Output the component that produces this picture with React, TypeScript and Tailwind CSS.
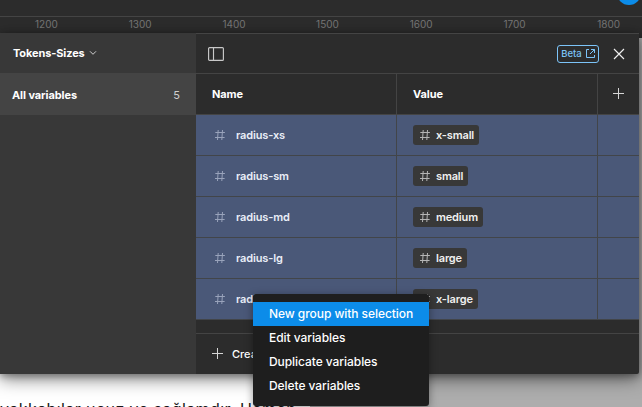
import React from "react";

const TICKS = ["1200", "1300", "1400", "1500", "1600", "1700", "1800"];

const ROWS = [
  { name: "radius-xs", value: "x-small" },
  { name: "radius-sm", value: "small" },
  { name: "radius-md", value: "medium" },
  { name: "radius-lg", value: "large" },
  { name: "radius-xl", value: "x-large" },
];

const MENU = ["New group with selection", "Edit variables", "Duplicate variables", "Delete variables"];

function Hash({ className }: { className: string }) {
  return (
    <svg viewBox="0 0 12 12" className={"h-3 w-3 shrink-0 " + className} fill="none" stroke="currentColor">
      <path d="M4.2 1 3.5 11M8.5 1 7.8 11M1.3 3.5h9.6M1 8.5h9.6" />
    </svg>
  );
}

function Plus() {
  return (
    <svg viewBox="0 0 12 12" className="h-3 w-3 shrink-0" fill="none" stroke="#d6d6d6">
      <path d="M5.5 0v11M0 5.5h11" />
    </svg>
  );
}

function Sidebar() {
  return (
    <aside className="flex w-[196px] shrink-0 flex-col bg-[#383838]">
      <div className="flex h-10 items-center pl-[13px] font-bold">
        <span className="tracking-[-0.12px]">Tokens-Sizes</span>
        <svg viewBox="0 0 8 6" className="ml-1 h-1.5 w-2" fill="none" stroke="#d0d0d0">
          <path d="m1 1.3 3 3 3-3" />
        </svg>
      </div>
      <div className="flex h-[42px] items-center justify-between bg-[#444444] pt-[3px] pr-4 pl-3">
        <span className="font-bold tracking-[-0.09px]">All variables</span>
        <span className="text-[#cfcfcf]">5</span>
      </div>
    </aside>
  );
}

function Toolbar() {
  return (
    <div className="flex h-[41px] items-center border-y border-[#444444] pr-3.5 pl-3">
      <svg viewBox="0 0 16 14" className="h-3.5 w-4" fill="none" stroke="#c9c9c9" strokeWidth="1.15">
        <rect x="0.6" y="0.6" width="14.8" height="12.8" rx="1" />
        <path d="M5.5 0.5v13" />
      </svg>
      <div className="ml-auto flex h-[18px] w-[42px] items-center justify-center gap-1 rounded-[3px] border border-[#7cc4f8] text-[9.5px] font-medium text-[#7cc4f8]">
        <span className="pt-px">Beta</span>
        <svg viewBox="0 0 9 9" className="h-[9px] w-[9px]" fill="none" stroke="currentColor">
          <path d="M3 .5H.5v8h8V6M5 .5h3.5V4M8.5.5 4 5" />
        </svg>
      </div>
      <svg viewBox="0 0 12 12" className="ml-3.5 h-3 w-3" fill="none" stroke="#f0f0f0" strokeWidth="1.15">
        <path d="m1 1 10 10M11 1 1 11" />
      </svg>
    </div>
  );
}

function Table() {
  return (
    <div>
      <div className="flex h-[41px] border-b border-[#444444] font-bold tracking-[-0.1px]">
        <div className="flex w-[201px] items-center border-r border-[#444444] pl-4">Name</div>
        <div className="flex w-[201px] items-center border-r border-[#444444] pl-4">Value</div>
        <div className="flex flex-1 items-center justify-center">
          <Plus />
        </div>
      </div>
      {ROWS.map((row) => (
        <div key={row.name} className="flex h-[41px] border-b border-[#424549] bg-[#4a5878] font-semibold tracking-[-0.15px]">
          <div className="flex w-[201px] items-center border-r border-[#424549] pl-[18px] text-[#e9edf7]">
            <Hash className="text-[#99a3bb]" />
            <span className="ml-[10px]">{row.name}</span>
          </div>
          <div className="flex w-[201px] items-center border-r border-[#424549] pl-4">
            <span className="flex h-5 items-center rounded-[3px] bg-[#383838] pr-[5px] pl-1.5 text-[#f0f0f0]">
              <Hash className="text-[#b5b5b5]" />
              <span className="ml-[5px]">{row.value}</span>
            </span>
          </div>
        </div>
      ))}
    </div>
  );
}

export default function App() {
  return (
    <div className="relative h-[407px] w-[642px] overflow-hidden bg-[#adadad] font-['Inter',sans-serif] text-[11px] text-white">
      <div className="flex h-full flex-col">
        <header className="relative h-[17px] shrink-0 border-b border-[#444444] bg-[#2c2c2c]">
          <span className="absolute -top-[19px] left-[617px] h-6 w-6 rounded-full bg-[#0c8ce9]" />
        </header>
        <div className="flex h-[21px] shrink-0 bg-[#2c2c2c] text-[10px] text-[#777777]">
          {TICKS.map((tick) => (
            <span key={tick} className="w-[93.7px] shrink-0 pl-[35px]">{tick}</span>
          ))}
        </div>
        <main className="min-h-0 flex-1">
          <div className="h-full w-[310px] bg-white pt-[361px]">
            <p className="text-[16px] leading-5 tracking-[0.42px] whitespace-nowrap text-[#171717]">
              yakkabılar ucuz ve sağlamdır. Hemen
            </p>
          </div>
        </main>
      </div>

      <section className="absolute top-[33px] left-0 flex h-[341px] w-[639px] rounded-br-[2px] bg-[#2c2c2c] shadow-[0_5px_17px_rgba(0,0,0,0.5),0_2px_7px_rgba(0,0,0,0.3)]">
        <Sidebar />
        <div className="flex flex-1 flex-col">
          <Toolbar />
          <Table />
          <div className="mt-auto flex h-[41px] items-center border-t border-[#444444] pl-4 font-medium">
            <Plus />
            <span className="ml-2">Create variable</span>
          </div>
        </div>
      </section>

      <nav className="absolute top-[294px] left-[253px] w-44 rounded-[3px] bg-[#1e1e1e] py-2 text-[12px] font-medium tracking-[-0.06px] shadow-[0_2px_8px_rgba(0,0,0,0.4)]">
        {MENU.map((item, i) => (
          <div key={item} className={"flex h-6 items-center pl-4 whitespace-nowrap " + (i === 0 ? "bg-[#0c8ce9]" : "")}>
            {item}
          </div>
        ))}
      </nav>
    </div>
  );
}
